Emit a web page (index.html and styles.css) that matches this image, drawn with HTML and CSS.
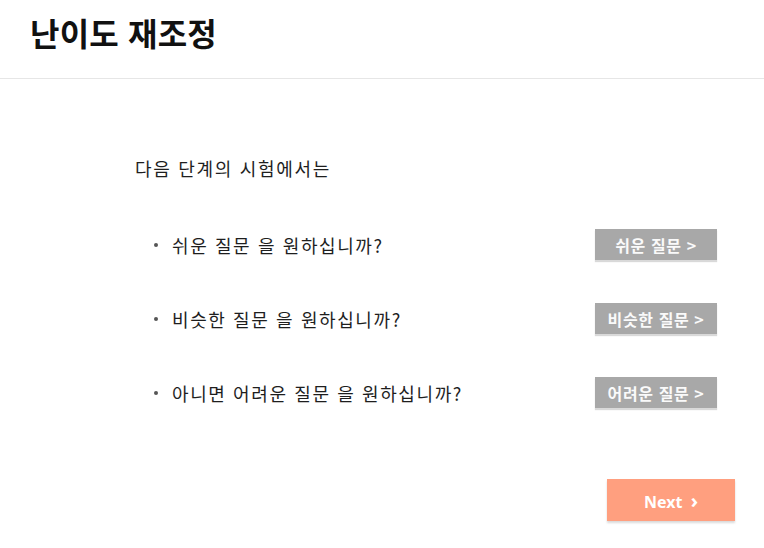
FILE: index.html
```html
<!DOCTYPE html>
<html lang="ko">
<head>
    <meta charset="UTF-8">
    <meta name="viewport" content="width=device-width, initial-scale=1.0">
    <title>난이도 재조정</title>
    <link rel="stylesheet" href="styles.css">
</head>
<body>
    <div id="page">
        <div id="header">
            <h1>난이도 재조정</h1>
        </div>

        <div id="content">
            <p class="intro">다음 단계의 시험에서는</p>

            <!-- Difficulty choices -->
            <div class="choice">
                <span class="question"><span class="dot"></span>쉬운 질문 을 원하십니까?</span>
                <button class="level">쉬운 질문 &gt;</button>
            </div>
            <div class="choice">
                <span class="question"><span class="dot"></span>비슷한 질문 을 원하십니까?</span>
                <button class="level">비슷한 질문 &gt;</button>
            </div>
            <div class="choice">
                <span class="question"><span class="dot"></span>아니면 어려운 질문 을 원하십니까?</span>
                <button class="level">어려운 질문 &gt;</button>
            </div>
        </div>

        <div id="footer">
            <button class="next">Next <span class="chev">&#8250;</span></button>
        </div>
    </div>
</body>
</html>
```

FILE: styles.css
```css
body {
    margin: 0;
    padding: 0;
    font-family: 'Noto Sans CJK KR', 'Noto Sans', sans-serif;
    background-color: #fff;
    color: #222;
}

#page {
    width: 764px;
    height: 548px;
    display: flex;
    flex-direction: column;
}

#header {
    height: 79px;
    border-bottom: 1px solid #e6e6e6;
    padding-left: 30px;
    box-sizing: border-box;
}

#header h1 {
    margin: 0;
    padding-top: 8px;
    font-size: 32px;
    line-height: 48px;
    font-weight: bold;
    color: #111;
    letter-spacing: 0.2px;
}

#content {
    padding: 71px 47px 0 135px;
}

.intro {
    margin: 0 0 43px 0;
    font-size: 18px;
    line-height: 36px;
    color: #1e1e1e;
    letter-spacing: 1.7px;
}

.choice {
    display: flex;
    align-items: center;
    justify-content: space-between;
    height: 31px;
    margin-bottom: 43px;
}

.question {
    display: flex;
    align-items: center;
    font-size: 18px;
    color: #1e1e1e;
    padding-left: 19px;
    letter-spacing: 1.6px;
}

.dot {
    width: 4px;
    height: 4px;
    border-radius: 50%;
    background-color: #555;
    margin-right: 14px;
}

.level {
    width: 122px;
    height: 31px;
    border: none;
    outline: none;
    background-color: #a8a8a8;
    color: #fafafa;
    font-family: 'Noto Sans CJK KR', 'Noto Sans', sans-serif;
    font-size: 16px;
    font-weight: bold;
    letter-spacing: 0.6px;
    box-shadow: 0 2px 1px rgba(0, 0, 0, 0.15);
    cursor: pointer;
    padding: 0;
}

#footer {
    display: flex;
    justify-content: flex-end;
    padding: 28px 29px 0 0;
}

.next {
    width: 128px;
    height: 42px;
    border: none;
    outline: none;
    background-color: #ff9f7f;
    color: #fff;
    font-family: 'Noto Sans', 'Noto Sans CJK KR', sans-serif;
    font-size: 16px;
    font-weight: bold;
    box-shadow: 0 2px 2px rgba(0, 0, 0, 0.15);
    cursor: pointer;
}

.chev {
    font-size: 20px;
    margin-left: 4px;
}
```
